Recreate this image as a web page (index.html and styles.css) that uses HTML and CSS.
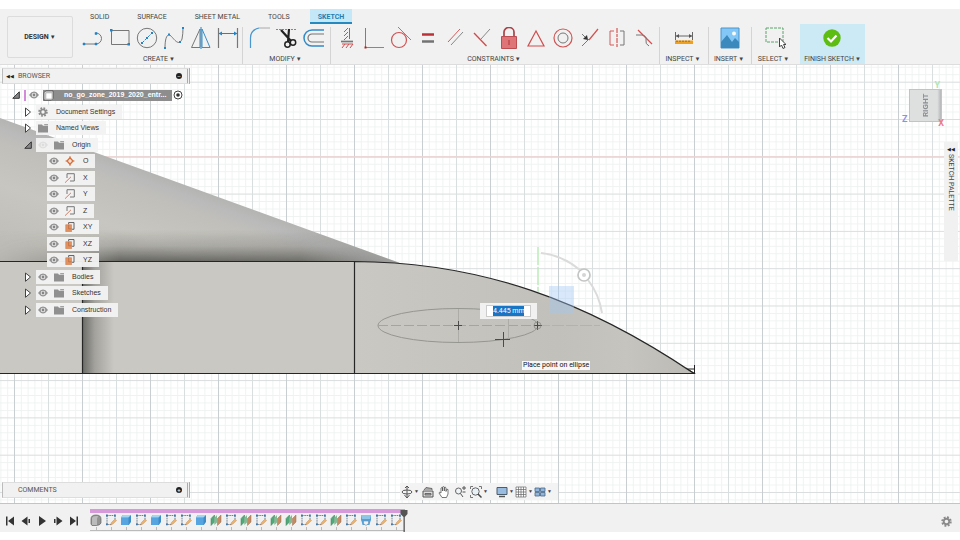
FILE: index.html
```html
<!DOCTYPE html>
<html lang="en">
<head>
<meta charset="utf-8">
<title>Sketch workspace</title>
<link rel="stylesheet" href="styles.css">
</head>
<body>
<svg class="defs" aria-hidden="true">
  <symbol id="eye" viewBox="0 0 10 8"><path d="M0 4Q5-2.8 10 4Q5 10.8 0 4Z" fill="#929292"/><circle cx="5" cy="4" r="2.3" fill="#eee"/><circle cx="5" cy="4" r="1.4" fill="#858585"/></symbol>
  <symbol id="folder" viewBox="0 0 10 9"><path d="M0 1H4L5 2.2H10V9H0Z" fill="#909090"/><path d="M6 0.5H10V1.8H6.5Z" fill="#a2a2a2"/></symbol>
  <symbol id="gear" viewBox="0 0 12 12"><circle cx="6" cy="6" r="4.5" fill="none" stroke="#8b8b8b" stroke-width="2.4" stroke-dasharray="2 1.534"/><circle cx="6" cy="6" r="3" fill="none" stroke="#8b8b8b" stroke-width="2"/></symbol>
  <symbol id="closed" viewBox="0 0 7 10"><path d="M1 1V9.3L6 5Z" fill="#fff" stroke="#444"/></symbol>
  <symbol id="open" viewBox="0 0 8 8"><path d="M7.3.8V7.3H.8Z" fill="#888" stroke="#333"/></symbol>
  <symbol id="axis" viewBox="0 0 10 10"><path d="M2 5V.7H9.3V8H5" fill="none" stroke="#777"/><path d="M0 9.7L6 3.8" stroke="#d77d61" fill="none"/></symbol>
  <symbol id="plane" viewBox="0 0 10 11"><path d="M3.5 2.5V.6H9.4V8H7" fill="none" stroke="#555"/><path d="M.3 3H6.7V10.7H.3Z" fill="#e29261" stroke="#ce7748" stroke-width=".6"/><path d="M3.5 3V7.5H6.7" fill="none" stroke="#b96c45" stroke-width=".8"/></symbol>
  <symbol id="t-sketch" viewBox="0 0 12 12"><path d="M2 1.5H10M2 1.5V10.5H7M10 1.5V5" fill="none" stroke="#526579" stroke-width=".8" stroke-dasharray="1.6 .7"/><path d="M1 .6h1.8v1.8H1zM9 .6h1.8v1.8H9zM1 9.5h1.8v1.8H1z" fill="#3d79ab"/><path d="M5.5 11L6.3 8.7L10 5L11.5 6.4L7.8 10.1Z" fill="#edb36c" stroke="#b77a43" stroke-width=".4"/></symbol>
  <symbol id="t-extrude" viewBox="0 0 12 12"><path d="M1 3.5L3 1H11V8L8.8 11H1Z" fill="#3e8bc7"/><path d="M1 3.5H8.5V11H1Z" fill="#57a5e0"/><path d="M1 3.5L3 1H11L8.5 3.5Z" fill="#a4d5f2"/></symbol>
  <symbol id="t-form" viewBox="0 0 12 12"><path d="M1 5Q1 1 6 1Q11 1 11 5V9Q10 11.5 6 11.5H2L1 10Z" fill="#949494" stroke="#666" stroke-width=".7"/><path d="M2 4Q3 1.5 8 2L7 5V11H2Z" fill="#bbb"/></symbol>
  <symbol id="t-plane" viewBox="0 0 12 12"><path d="M1 4.5L4.5 1V8L1 11.5Z" fill="#51a878" stroke="#398159" stroke-width=".5"/><path d="M4.3 4L7 1V8.5L4.3 11Z" fill="#84b994"/><path d="M7.5 4.5L11 1V8L7.5 11.5Z" fill="#c48b62" stroke="#9c6f50" stroke-width=".5"/></symbol>
  <symbol id="t-loft" viewBox="0 0 12 12"><path d="M1 1H11V6Q10 8 9.5 11H2.5Q2 8 1 6Z" fill="#54a1d8"/><path d="M1 1H11L10 5H2Z" fill="#8dc5e8"/><path d="M3.5 7H8.5V9.500L6 11.500L3.500 9.500Z" fill="#f2f2f2" stroke="#758ca0" stroke-width=".6"/></symbol>
</svg>

<div class="app">
  <header class="toolbar">
    <button class="workspace" type="button">DESIGN <span class="caret">▼</span></button>
    <div class="ribbon">
      <nav class="tabs">
        <a href="#solid">SOLID</a><a href="#surface">SURFACE</a><a href="#sheet">SHEET METAL</a><a href="#tools">TOOLS</a><a href="#sketch" class="active">SKETCH</a>
      </nav>
      <div class="groups">
        <section class="group create">
          <div class="tools">
            <button type="button" aria-label="Line"><svg viewBox="0 0 22 22"><path d="M2 17H14A5 5 0 0 0 14 6" fill="none" stroke="#777"/><path d="M1 16h2v2H1zM13 16h2v2h-2zM13 5.500h2v2h-2z" fill="#2384c8" stroke="#2384c8" stroke-width=".5"/></svg></button>
            <button type="button" aria-label="Rectangle"><svg viewBox="0 0 22 22"><path d="M2.500 3.500H20V17.500H2.500Z" fill="none" stroke="#777"/><path d="M1 2h2.500v2.500H1zM18.500 16H21v2.500h-2.500z" fill="#2384c8"/></svg></button>
            <button type="button" aria-label="Circle"><svg viewBox="0 0 22 22"><circle cx="11" cy="11" r="9.700" fill="none" stroke="#777"/><path d="M6 16L16 6" stroke="#2384c8" stroke-dasharray="3 1"/><path d="M5 15h2v2H5zM10 10h2v2h-2zM15 5h2v2h-2z" fill="#2384c8"/></svg></button>
            <button type="button" aria-label="Spline"><svg viewBox="0 0 22 22"><path d="M2 21C2 9 5 6 8 9S16 20 19 12Q20 7 20 1" fill="none" stroke="#777"/><path d="M1 20h2v2H1zM5 6.500h2v2H5zM16 14h2v2h-2zM19 0h2v2h-2z" fill="#2384c8"/></svg></button>
            <button type="button" aria-label="Mirror"><svg viewBox="0 0 22 22"><path d="M10 2L1.500 20.500H10Z" fill="none" stroke="#777"/><path d="M12 2L20 20.500H12Z" fill="none" stroke="#3a8dc5"/><path d="M11 0V22" stroke="#2384c8"/></svg></button>
            <button type="button" aria-label="Dimension"><svg viewBox="0 0 22 22"><path d="M1.500 1V21M20.500 1V21" stroke="#777" stroke-width="1.200"/><path d="M2 6.500H20" stroke="#2384c8"/><path d="M1.500 6.500L5 4.500V8.500ZM20.500 6.500L17 4.500V8.500Z" fill="#2384c8"/></svg></button>
          </div>
          <button class="label" type="button">CREATE <span class="caret">▼</span></button>
        </section>
        <section class="group modify">
          <div class="tools">
            <button type="button" aria-label="Fillet"><svg viewBox="0 0 22 22"><path d="M1.500 21V11Q1.500 3 10 1" fill="none" stroke="#4a96cf" stroke-width="1.200"/><path d="M10 1H21" stroke="#aaa"/></svg></button>
            <button type="button" aria-label="Trim"><svg viewBox="0 0 22 22"><path d="M0 2.500H21" stroke="#4a96cf" stroke-dasharray="2 1"/><path d="M5 3L15 14M13 2L12 15" stroke="#222" stroke-width="2.200"/><circle cx="11.500" cy="17.500" r="2.700" fill="none" stroke="#222" stroke-width="1.500"/><circle cx="17" cy="15.500" r="2.700" fill="none" stroke="#222" stroke-width="1.500"/></svg></button>
            <button type="button" aria-label="Offset"><svg viewBox="0 0 22 22"><path d="M21 3H9A8 8 0 0 0 9 19H21" fill="none" stroke="#3289c7" stroke-width="1.500"/><path d="M21 7H9A4 4 0 0 0 9 15H21" fill="none" stroke="#777" stroke-width="1.200"/></svg></button>
          </div>
          <button class="label" type="button">MODIFY <span class="caret">▼</span></button>
        </section>
        <section class="group constraints">
          <div class="tools">
            <button type="button" aria-label="Horizontal/Vertical"><svg viewBox="0 0 22 22"><path d="M13.500 1V12" stroke="#cf4f50"/><path d="M8 5L12 1M8 9L12 5M8 13L12 9M6 21L9 17M10 21L13 17M14 21L17 17" stroke="#cf4f50"/><path d="M5 14.500H17" stroke="#777" stroke-width="1.700"/><path d="M6 17H17" stroke="#cf4f50"/></svg></button>
            <button type="button" aria-label="Coincident"><svg viewBox="0 0 22 22"><path d="M2.500 1V20" stroke="#d35a5a"/><path d="M3 20.500H21" stroke="#888"/><path d="M1.500 19.500h2v2h-2z" fill="#a22"/></svg></button>
            <button type="button" aria-label="Tangent"><svg viewBox="0 0 22 22"><circle cx="9" cy="13" r="7.500" fill="none" stroke="#d15253" stroke-width="1.200"/><path d="M8 0L21 13" stroke="#888"/></svg></button>
            <button type="button" aria-label="Equal"><svg viewBox="0 0 22 22"><path d="M5 7.500H17" stroke="#bb3036" stroke-width="2.500"/><path d="M5 14.500H17" stroke="#737373" stroke-width="2.500"/></svg></button>
            <button type="button" aria-label="Parallel"><svg viewBox="0 0 22 22"><path d="M4 15L16 2" stroke="#d35a5a"/><path d="M7 18L19 5" stroke="#888"/></svg></button>
            <button type="button" aria-label="Perpendicular"><svg viewBox="0 0 22 22"><path d="M3 6L15.500 19" stroke="#ce4b4c" stroke-width="1.300"/><path d="M10 12L19 2" stroke="#888"/></svg></button>
            <button type="button" aria-label="Fix"><svg viewBox="0 0 22 22"><path d="M6 10V5A5 4.500 0 0 1 16 5V10" fill="none" stroke="#a84348" stroke-width="1.700"/><path d="M3.500 9.500H18.500V21.500H3.500Z" fill="#df7478" stroke="#bc4c52"/><path d="M11 13V18" stroke="#aa343a"/></svg></button>
            <button type="button" aria-label="Midpoint"><svg viewBox="0 0 22 22"><path d="M11 4L3 19H19Z" fill="none" stroke="#d14c4c" stroke-width="1.200"/></svg></button>
            <button type="button" aria-label="Concentric"><svg viewBox="0 0 22 22"><circle cx="11" cy="11" r="9" fill="none" stroke="#d15555" stroke-width="1.200"/><circle cx="11" cy="11" r="5" fill="none" stroke="#777"/></svg></button>
            <button type="button" aria-label="Collinear"><svg viewBox="0 0 22 22"><path d="M10 13L19 2" stroke="#d35050" stroke-width="1.200"/><path d="M3 19L10 12" stroke="#777"/><path d="M3 7L7 11" stroke="#777"/><path d="M9 13L4 12L8 8Z" fill="#333"/></svg></button>
            <button type="button" aria-label="Symmetry"><svg viewBox="0 0 22 22"><path d="M11 1V21" stroke="#d45858" stroke-width="1.200" stroke-dasharray="5 1 3 1"/><path d="M8 4H4V18H8" fill="none" stroke="#d45858"/><path d="M14 4H18V18H14" fill="none" stroke="#777"/></svg></button>
            <button type="button" aria-label="Curvature"><svg viewBox="0 0 22 22"><path d="M5 3L19 17" stroke="#d35050" stroke-width="1.200"/><path d="M3 8H9Q14 9 13 13T16 19" fill="none" stroke="#777"/></svg></button>
          </div>
          <button class="label" type="button">CONSTRAINTS <span class="caret">▼</span></button>
        </section>
        <section class="group single">
          <div class="tools"><button type="button" aria-label="Measure"><svg viewBox="0 0 22 22"><path d="M2.500 5V13M19.500 5V13M3 9H19" stroke="#666"/><path d="M3 9L6 7V11ZM19 9L16 7V11Z" fill="#555"/><path d="M2 13.500H20V17H2Z" fill="#efa01e"/><path d="M4 13.500V15M7 13.500V15M10 13.500V15M13 13.500V15M16 13.500V15" stroke="#875711"/></svg></button></div>
          <button class="label" type="button">INSPECT <span class="caret">▼</span></button>
        </section>
        <section class="group insert">
          <div class="tools"><button type="button" aria-label="Image"><svg viewBox="0 0 22 22"><path d="M2 1H20V21H2Z" fill="#82c7f6" stroke="#4a94cc"/><path d="M2 15L8 8L13 15L16 11L20 15V21H2Z" fill="#3c89bd"/><circle cx="15" cy="6.500" r="2" fill="#f8fbfa"/></svg></button></div>
          <button class="label" type="button">INSERT <span class="caret">▼</span></button>
        </section>
        <section class="group select">
          <div class="tools"><button type="button" aria-label="Select"><svg viewBox="0 0 22 22"><path d="M2 1H19V15H2Z" fill="none" stroke="#5aa56c" stroke-dasharray="3 1"/><path d="M15.500 11V20L17.500 18L19 21.500L21 20.500L19.500 17.500H22Z" fill="#fff" stroke="#444"/></svg></button></div>
          <button class="label" type="button">SELECT <span class="caret">▼</span></button>
        </section>
        <section class="group finish">
          <div class="tools"><button type="button" aria-label="Finish"><svg viewBox="0 0 22 22"><circle cx="10" cy="11" r="8.700" fill="#5dbd13"/><path d="M5.500 11L9 14.500L14.500 8.500" fill="none" stroke="#fff" stroke-width="2.200"/></svg></button></div>
          <button class="label" type="button">FINISH SKETCH <span class="caret">▼</span></button>
        </section>
      </div>
    </div>
  </header>

  <main class="canvas">
    <svg class="scene" viewBox="0 65 960 438" preserveAspectRatio="xMidYMid slice" aria-hidden="true">
      <defs>
        <pattern id="minor" x="14" y="156.300" width="6.800" height="7.460" patternUnits="userSpaceOnUse"><path d="M0 .5H6.800M.5 0V7.460" stroke="#8b979b" stroke-opacity=".13" fill="none"/></pattern>
        <pattern id="major" x="14" y="156.300" width="34" height="37.300" patternUnits="userSpaceOnUse"><path d="M0 .5H34M.5 0V37.300" stroke="#7d8a8e" stroke-opacity=".2" fill="none"/></pattern>
        <pattern id="heavy" x="14" y="0" width="68" height="68" patternUnits="userSpaceOnUse"><path d="M.5 0V68" stroke="#7d8a8e" stroke-opacity=".18" fill="none"/></pattern>
        <linearGradient id="cone" x1="215" y1="178" x2="170" y2="302" gradientUnits="userSpaceOnUse"><stop offset="0" stop-color="#a9a9a4"/><stop offset=".2" stop-color="#bababa"/><stop offset=".3" stop-color="#c0bfba"/><stop offset=".6" stop-color="#c7c6c0"/><stop offset="1" stop-color="#bfbeb8"/></linearGradient>
        <linearGradient id="fold" x1="0" y1="230" x2="0" y2="262" gradientUnits="userSpaceOnUse"><stop offset="0" stop-color="#555550" stop-opacity="0"/><stop offset=".5" stop-color="#555550" stop-opacity=".25"/><stop offset="1" stop-color="#484844" stop-opacity=".8"/></linearGradient>
        <linearGradient id="fade" x1="0" y1="0" x2="400" y2="0" gradientUnits="userSpaceOnUse"><stop offset="0" stop-color="#fff" stop-opacity=".1"/><stop offset=".15" stop-color="#fff" stop-opacity=".35"/><stop offset=".3" stop-color="#fff"/><stop offset=".75" stop-color="#fff" stop-opacity=".9"/><stop offset="1" stop-color="#fff" stop-opacity=".2"/></linearGradient>
        <mask id="foldMask" maskUnits="userSpaceOnUse" x="0" y="100" width="400" height="170"><path d="M0 100H400V270H0Z" fill="url(#fade)"/></mask>
        <linearGradient id="side" x1="82" y1="0" x2="114" y2="0" gradientUnits="userSpaceOnUse"><stop offset="0" stop-color="#696965"/><stop offset=".4" stop-color="#a3a29d"/><stop offset="1" stop-color="#c9c8c2"/></linearGradient>
        <linearGradient id="nose" x1="354" y1="0" x2="694" y2="0" gradientUnits="userSpaceOnUse"><stop offset="0" stop-color="#c9c8c2"/><stop offset=".6" stop-color="#c1c0ba"/><stop offset=".8" stop-color="#c5c4be"/><stop offset="1" stop-color="#bbbab4"/></linearGradient>
      </defs>
      <path d="M0 65H960V503H0Z" fill="#fff"/>
      <path d="M0 65H960V503H0Z" fill="url(#minor)"/>
      <path d="M0 65H960V503H0Z" fill="url(#major)"/>
      <path d="M0 65H960V503H0Z" fill="url(#heavy)"/>
      <path d="M0 157H960" stroke="#efd2d2" stroke-width="1.300"/>
      <path d="M0 118L400 263H0Z" fill="url(#cone)"/>
      <path d="M0 118L400 263H0Z" fill="url(#fold)" mask="url(#foldMask)"/>
      <path d="M0 262H354V373H0Z" fill="#c9c8c2"/>
      <path d="M82 262H114V373H82Z" fill="url(#side)"/>
      <path d="M354 262C480 262 585 300 694 373H354Z" fill="url(#nose)"/>
      <path d="M0 261.500H354C480 262 585 300 694 373.500H0M82.500 262V373M354.500 262V373" fill="none" stroke="#262626" stroke-width="1.200"/>
      <path d="M686 368L694.500 373.500V365M688 369H694" fill="none" stroke="#222"/>
      <ellipse cx="458" cy="325.500" rx="80" ry="17" fill="none" stroke="#969691"/>
      <path d="M378 325.500H538" stroke="#a5a49f" stroke-dasharray="10 3"/>
      <path d="M458.500 309V342M508.500 316V339" stroke="#adaca6"/>
      <path d="M538 325.500H600" stroke="#c8aaa5" stroke-dasharray="12 2"/>
      <path d="M454 325.500H462M458.500 321V330M495 339.500H510M503.500 332V347M534 325.500H542M537.500 321V330" stroke="#4b4b49"/>
      <circle cx="537.500" cy="325.500" r="3.500" fill="none" stroke="#8b8b86" stroke-width=".8"/>
      <path d="M538 247V292" stroke="#b4ebb1" stroke-width="1.300" stroke-dasharray="18 2"/>
      <path d="M549 286H574V314H549Z" fill="#9fc8f4" fill-opacity=".4"/>
      <path d="M541 253Q562 255 580 270M588 280Q599 294 602 313" fill="none" stroke="#dadbda" stroke-width="2"/>
      <circle cx="584" cy="275" r="6" fill="#fff" stroke="#c3c4c4" stroke-width="1.700"/><circle cx="584" cy="275" r="2" fill="#d5d5d5"/>
    </svg>

    <aside class="browser">
      <div class="panel-bar"><span class="collapse">◀◀</span><span>BROWSER</span><button class="dot" type="button" aria-label="Hide panel">–</button></div>
      <ul class="tree">
        <li class="root"><svg class="tw"><use href="#open"/></svg><span class="pink"></span><svg class="eye"><use href="#eye"/></svg><span class="title"><svg viewBox="0 0 12 12" class="doc"><path d="M1 3L3 1H11V9L9 11H1Z" fill="#e9e9e9" stroke="#555"/><path d="M3 3H10V10H3Z" fill="#fff" stroke="#aaa"/></svg><b>no_go_zone_2019_2020_entr...</b></span><svg class="target" viewBox="0 0 10 10"><circle cx="5" cy="5" r="4" fill="#fff" stroke="#444"/><circle cx="5" cy="5" r="1.800" fill="#333"/></svg></li>
        <li><svg class="tw"><use href="#closed"/></svg><span class="row wide"><svg class="ico"><use href="#gear"/></svg>Document Settings</span></li>
        <li><svg class="tw"><use href="#closed"/></svg><span class="row wide"><svg class="ico"><use href="#folder"/></svg>Named Views</span></li>
        <li><svg class="tw"><use href="#open"/></svg><span class="row"><svg class="eye faint"><use href="#eye"/></svg><svg class="ico"><use href="#folder"/></svg>Origin</span></li>
        <li class="child"><span class="row"><svg class="eye"><use href="#eye"/></svg><svg class="ico" viewBox="0 0 10 10"><path d="M5 0V10M.5 5H9.500" stroke="#d88157"/><path d="M5 1.800L8 5L5 8.200L2 5Z" fill="#f4e0d5" stroke="#d66e3a" stroke-width="1.300"/></svg>O</span></li>
        <li class="child"><span class="row"><svg class="eye"><use href="#eye"/></svg><svg class="ico"><use href="#axis"/></svg>X</span></li>
        <li class="child"><span class="row"><svg class="eye"><use href="#eye"/></svg><svg class="ico"><use href="#axis"/></svg>Y</span></li>
        <li class="child"><span class="row"><svg class="eye"><use href="#eye"/></svg><svg class="ico"><use href="#axis"/></svg>Z</span></li>
        <li class="child"><span class="row"><svg class="eye"><use href="#eye"/></svg><svg class="ico"><use href="#plane"/></svg>XY</span></li>
        <li class="child"><span class="row"><svg class="eye"><use href="#eye"/></svg><svg class="ico"><use href="#plane"/></svg>XZ</span></li>
        <li class="child"><span class="row"><svg class="eye"><use href="#eye"/></svg><svg class="ico"><use href="#plane"/></svg>YZ</span></li>
        <li><svg class="tw"><use href="#closed"/></svg><span class="row"><svg class="eye"><use href="#eye"/></svg><svg class="ico"><use href="#folder"/></svg>Bodies</span></li>
        <li><svg class="tw"><use href="#closed"/></svg><span class="row"><svg class="eye"><use href="#eye"/></svg><svg class="ico"><use href="#folder"/></svg>Sketches</span></li>
        <li><svg class="tw"><use href="#closed"/></svg><span class="row"><svg class="eye"><use href="#eye"/></svg><svg class="ico"><use href="#folder"/></svg>Construction</span></li>
      </ul>
    </aside>

    <label class="value"><input type="text" value="4.445 mm" aria-label="Length"></label>
    <div class="hint">Place point on ellipse</div>

    <div class="cube"><button type="button">RIGHT</button><span class="ax y">Y</span><span class="ax z">Z</span><span class="ax x">X</span></div>
    <button class="palette" type="button"><span class="collapse">◀◀</span>SKETCH PALETTE</button>

    <div class="panel-bar comments"><span>COMMENTS</span><button class="dot" type="button" aria-label="Add comment">+</button></div>

    <div class="view-tools">
      <button type="button" aria-label="Orbit"><svg viewBox="0 0 12 12"><path d="M6 0V12M3.500 9L6 12L8.500 9M4 2L6 0L8 2" fill="none" stroke="#555"/><ellipse cx="6" cy="6" rx="5" ry="2" fill="none" stroke="#555"/></svg><i>▼</i></button>
      <button type="button" aria-label="Look at"><svg viewBox="0 0 12 12"><path d="M1 5H11V11H1Z" fill="#ddd" stroke="#555"/><path d="M2 4L4 1.500L10 2.500V4M3 7.500H9V9H3Z" fill="#aaa" stroke="#555" stroke-width=".8"/></svg></button>
      <button type="button" aria-label="Pan"><svg viewBox="0 0 12 12"><path d="M4 11.500L1 7Q1 5.500 3 7V2Q4 1 4.500 2V5V1Q5.500 0 6.300 1V5V1.500Q7.500 .5 8 2V5.500Q8.500 2 10 3.500V8L8.500 11.500Z" fill="#fff" stroke="#555" stroke-width=".8"/></svg></button>
      <button type="button" aria-label="Zoom"><svg viewBox="0 0 12 12"><circle cx="4.500" cy="5" r="3" fill="#eef3f5" stroke="#666"/><path d="M6.500 7.500L9 11M8 2H12M10 0V4M8.500 6H11.500" stroke="#555"/></svg></button>
      <button type="button" aria-label="Fit"><svg viewBox="0 0 12 12"><path d="M.5 3V.5H3M9 .5H11.500V3M.5 9V11.500H3" fill="none" stroke="#777"/><circle cx="5.500" cy="5.500" r="3.700" fill="#e8f2f6" stroke="#666"/><path d="M8 8L11.500 11.500" stroke="#444" stroke-width="1.500"/></svg><i>▼</i></button>
      <button class="gap" type="button" aria-label="Display"><svg viewBox="0 0 12 12"><path d="M1 1.500H11V8.500H1Z" fill="#9abce0" stroke="#4b5c6d"/><path d="M3 10.500H9" stroke="#555" stroke-width="1.500"/></svg><i>▼</i></button>
      <button type="button" aria-label="Grid"><svg viewBox="0 0 12 12"><path d="M1 1H11V11H1ZM3.500 1V11M6 1V11M8.500 1V11M1 3.500H11M1 6H11M1 8.500H11" fill="#fff" stroke="#666" stroke-width=".7"/></svg><i>▼</i></button>
      <button type="button" aria-label="Viewports"><svg viewBox="0 0 12 12"><path d="M1 2H5.500V5.500H1ZM6.500 2H11V5.500H6.500ZM1 6.500H5.500V10H1ZM6.500 6.500H11V10H6.500Z" fill="#91b5dc" stroke="#486786" stroke-width=".8"/></svg><i>▼</i></button>
    </div>
  </main>

  <footer class="timeline">
    <div class="player">
      <button type="button" aria-label="Start"><svg viewBox="0 0 10 10"><path d="M1 .5H2.500V9.500H1ZM9 .5V9.500L3 5Z"/></svg></button>
      <button type="button" aria-label="Back"><svg viewBox="0 0 10 10"><path d="M6.500 .5V9.500L.5 5ZM7.500 3H9V7H7.500Z"/></svg></button>
      <button type="button" aria-label="Play"><svg viewBox="0 0 10 10"><path d="M2 0V10L9 5Z"/></svg></button>
      <button type="button" aria-label="Forward"><svg viewBox="0 0 10 10"><path d="M3.500 .5V9.500L9.500 5ZM1 3H2.500V7H1Z"/></svg></button>
      <button type="button" aria-label="End"><svg viewBox="0 0 10 10"><path d="M7.500 .5H9V9.500H7.500ZM1 .5V9.500L7 5Z"/></svg></button>
    </div>
    <div class="history">
      <ol>
        <li><svg><use href="#t-form"/></svg></li><li><svg><use href="#t-sketch"/></svg></li><li><svg><use href="#t-extrude"/></svg></li><li><svg><use href="#t-sketch"/></svg></li><li><svg><use href="#t-extrude"/></svg></li><li><svg><use href="#t-sketch"/></svg></li><li><svg><use href="#t-sketch"/></svg></li><li><svg><use href="#t-extrude"/></svg></li><li><svg><use href="#t-plane"/></svg></li><li><svg><use href="#t-sketch"/></svg></li><li><svg><use href="#t-plane"/></svg></li><li><svg><use href="#t-sketch"/></svg></li><li><svg><use href="#t-plane"/></svg></li><li><svg><use href="#t-plane"/></svg></li><li><svg><use href="#t-sketch"/></svg></li><li><svg><use href="#t-sketch"/></svg></li><li><svg><use href="#t-plane"/></svg></li><li><svg><use href="#t-sketch"/></svg></li><li><svg><use href="#t-loft"/></svg></li><li><svg><use href="#t-sketch"/></svg></li><li><svg><use href="#t-sketch"/></svg></li>
      </ol>
      <svg class="marker" viewBox="0 0 8 22"><path d="M.5 0H7.500V4L4.800 7V22H3.500V7L.5 4Z" fill="#555"/></svg>
    </div>
    <button class="settings" type="button" aria-label="Settings"><svg><use href="#gear"/></svg></button>
  </footer>
</div>
</body>
</html>
```
FILE: styles.css
```css
* { box-sizing: border-box; }
body { margin: 0; background: #fff; color: #444; font: 7px/10px Roboto, "Liberation Sans", sans-serif; }
button, input { margin: 0; padding: 0; border: 0; background: none; color: inherit; font: inherit; }
button { display: flex; align-items: center; justify-content: center; }
a { color: inherit; text-decoration: none; }
ul, ol { margin: 0; padding: 0; list-style: none; }
svg { display: block; flex: none; }
.defs { position: absolute; width: 0; height: 0; }
.app { display: flex; flex-direction: column; height: 100vh; padding: 9px 0 8px; }
.caret { font-size: 6px; line-height: 8px; margin-left: 1px; padding-bottom: 1px; }

/* Ribbon */
.toolbar { display: flex; background: #f1f1f1; border-bottom: 1px solid #ddd; height: 56px; flex: none; }
.workspace { width: 66px; height: 42px; margin: 7px 5px 0 7px; border: 1px solid #dcdcdc; border-radius: 2px; font-weight: 700; color: #333; }
.ribbon { flex: 1; }
.tabs { display: flex; gap: 12px; height: 15px; padding-left: 4px; }
.tabs a { padding: 3px 8px 0; }
.tabs .active { background: #c5e8f8; color: #267eae; font-weight: 700; border-bottom: 2px solid #2389be; }
.groups { display: flex; }
.group { display: flex; flex-direction: column; height: 40px; border-right: 1px solid #f1f1f1; }
.group:not(.finish, .select) { border-image: linear-gradient(#f1f1f1 10%, #d4d4d4 10%) 1; border-left: 0; border-top: 0; border-bottom: 0; }
.tools { display: flex; justify-content: center; padding-top: 3px; }
.tools button { width: 27px; height: 22px; }
.tools svg { width: 22px; height: 22px; }
.label { padding-right: 2px; margin-top: 5px; white-space: nowrap; }
.create { padding: 0 1px; }
.modify { padding: 0 3px; }
.constraints { padding: 0 2px; }
.single { width: 49px; }
.insert { width: 43px; }
.select { width: 46px; }
.finish { width: 65px; margin-left: 2px; background: #cce9f6; border-right: 0; }
.finish .label { padding: 0; }

/* Canvas */
.canvas { position: relative; flex: 1; min-height: 0; overflow: hidden; }
.scene { width: 100%; height: 100%; }
.browser { position: absolute; left: 2px; top: 3px; width: 188px; }
.panel-bar { display: flex; align-items: center; gap: 4px; height: 16px; padding: 0 5px 0 3px; background: #f1f1f1; border: 1px solid #ddd; border-left-color: #bbb; border-right: 3px double #aaa; color: #555; }
.collapse { font-size: 5px; color: #222; }
.dot { width: 6px; height: 6px; margin-left: auto; border-radius: 50%; background: #222; color: #fff; font-size: 6px; line-height: 6px; }
.comments { position: absolute; left: 2px; bottom: 5px; width: 188px; padding-left: 15px; }
.tree { display: grid; grid-auto-rows: 16px 17px; margin-top: 3px; font-family: "Liberation Sans", sans-serif; color: #333; }
.tree li { display: flex; align-items: center; padding-left: 22px; }
.tw { width: 8px; height: 10px; margin-right: 4px; }
.row { display: flex; align-items: center; height: 14px; padding: 0 7px 0 2px; background: rgba(243, 243, 243, .96); }
.eye { width: 10px; height: 8px; margin-right: 6px; }
.faint { opacity: .18; }
.ico { width: 10px; height: 10px; margin-right: 8px; }
.tree .child { padding-left: 45px; }
.child .row { min-width: 47px; }
.tree .root { padding-left: 10px; }
.pink { width: 2px; height: 11px; background: #d28cda; margin-right: 3px; }
.root .eye { margin-right: 4px; }
.title { display: flex; align-items: center; gap: 10px; width: 129px; height: 11px; background: #8d8d8d; color: #fff; }
.doc { width: 11px; height: 11px; }
.target { width: 10px; height: 10px; margin-left: 1px; }
.value { position: absolute; left: 480px; top: 238px; display: flex; justify-content: center; width: 57px; padding: 2px 6px; background: #f1f1f1; }
.value::before { content: ""; position: absolute; inset: 2px 6px; background: #fff; border: 1px solid #ccc; }
.value input { position: relative; width: 31px; height: 10px; margin: 1px 0; background: #1675c5; color: #fff; text-align: center; }
.hint { position: absolute; left: 522px; top: 296px; padding: 0 1px; line-height: 9px; background: #f7f7f7; color: #111; }
.cube { position: absolute; right: 18px; top: 24px; width: 33px; height: 33px; background: linear-gradient(90deg, #dedfdf 88%, #b5b6b7); border: 1px solid #c2c3c4; }
.cube button { width: 100%; height: 100%; writing-mode: vertical-rl; transform: rotate(180deg); font-size: 8px; color: #8b8f93; font-weight: 700; }
.ax { position: absolute; font-size: 9px; font-weight: 700; }
.y { top: -10px; right: 1px; color: #b2e3b0; }
.z { left: -8px; bottom: -3px; color: #8f8fe4; }
.x { right: -3px; bottom: -7px; color: #ec7d85; }
.palette { position: absolute; right: 2px; top: 77px; width: 14px; height: 119px; padding-top: 2px; writing-mode: vertical-rl; justify-content: flex-start; background: #f1f1f1; }
.palette .collapse { writing-mode: horizontal-tb; }
.view-tools { position: absolute; left: 400px; bottom: 3px; display: flex; align-items: center; gap: 4px; height: 17px; width: 158px; padding-left: 1px; background: #f3f3f3; }
.view-tools svg { width: 12px; height: 12px; }
.view-tools i { font: 5px/7px Roboto, sans-serif; width: 4px; margin-left: 1px; }
.view-tools .gap { margin-left: 5px; }
.view-tools button:nth-child(n+6) { margin-right: -2px; }

/* Timeline */
.timeline { display: flex; height: 29px; flex: none; background: #f1f1f1; border-top: 1px solid #c4c4c4; }
.player { display: flex; align-items: center; gap: 6px; padding: 6px 11px 0 5px; }
.player svg { width: 10px; height: 10px; fill: #333; }
.history { position: relative; margin-top: 5px; height: 23px; }
.history ol { display: flex; height: 22px; border-top: 4px solid #d69adb; border-bottom: 1px solid #bbb; }
.history li { width: 15px; padding: 1px 0 0; background: linear-gradient(#bbb, #bbb) 6px 14px / 1px 3px no-repeat; }
.history li svg { width: 12px; height: 12px; }
.marker { position: absolute; right: -3px; top: 1px; width: 8px; height: 22px; }
.settings { margin: 6px 8px 0 auto; }
.settings svg { width: 11px; height: 11px; }
```
